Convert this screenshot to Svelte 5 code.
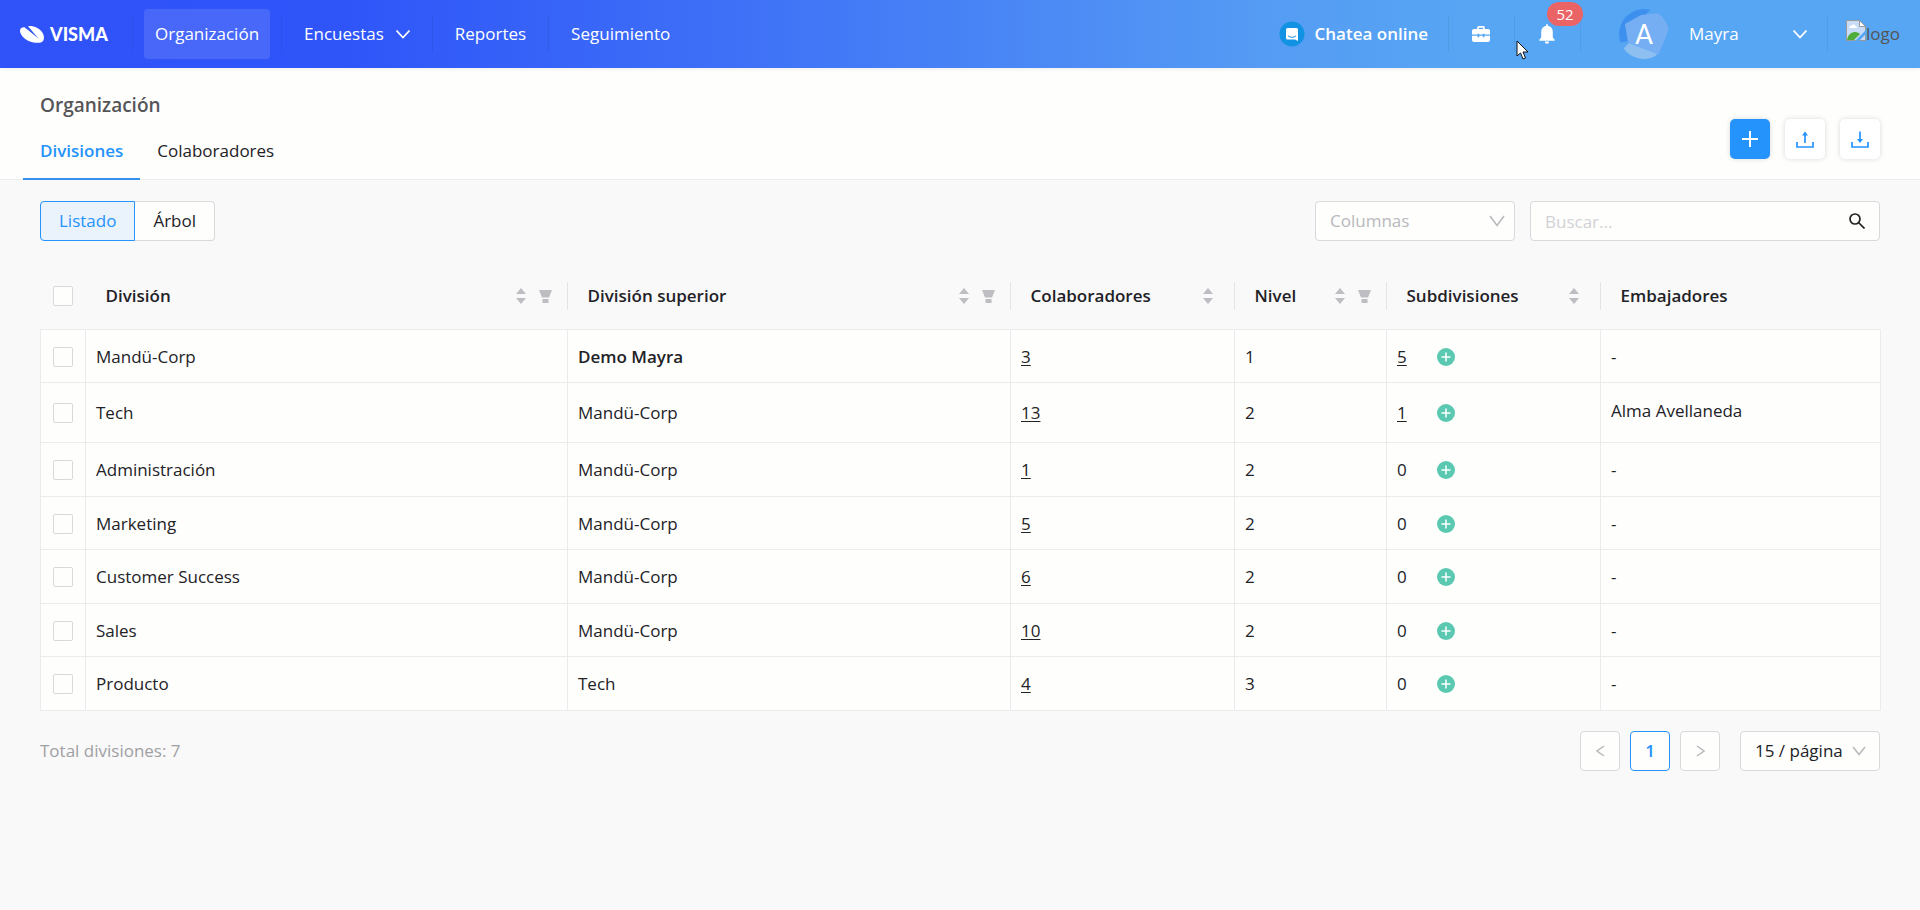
<script>
  const menu = [
    { label: 'Organización', active: true },
    { label: 'Encuestas', dropdown: true },
    { label: 'Reportes' },
    { label: 'Seguimiento' }
  ];

  const columns = [
    { label: 'División', sort: true, filter: true },
    { label: 'División superior', sort: true, filter: true },
    { label: 'Colaboradores', sort: true },
    { label: 'Nivel', sort: true, filter: true },
    { label: 'Subdivisiones', sort: true },
    { label: 'Embajadores' }
  ];

  const rows = [
    { name: 'Mandü-Corp', parent: 'Demo Mayra', root: true, people: 3, level: 1, subs: 5 },
    { name: 'Tech', parent: 'Mandü-Corp', people: 13, level: 2, subs: 1, ambassador: 'Alma Avellaneda' },
    { name: 'Administración', parent: 'Mandü-Corp', people: 1, level: 2, subs: 0 },
    { name: 'Marketing', parent: 'Mandü-Corp', people: 5, level: 2, subs: 0 },
    { name: 'Customer Success', parent: 'Mandü-Corp', people: 6, level: 2, subs: 0 },
    { name: 'Sales', parent: 'Mandü-Corp', people: 10, level: 2, subs: 0 },
    { name: 'Producto', parent: 'Tech', people: 4, level: 3, subs: 0 }
  ];

  let view = 'list';
  let search = '';
  let selected = rows.map(() => false);

  $: allSelected = selected.every(Boolean);

  function toggleAll() {
    const value = !allSelected;
    selected = rows.map(() => value);
  }
</script>

<header>
  <a href="#home" class="brand">
    <svg width="24" height="17" viewBox="0 0 24 17" fill="#fff">
      <path d="M4.500 1.200C1.500 1 0 2.600 0 5c.2 4.300 5.500 9.300 11.500 11 5 1.300 9.500 1.200 11.300-.7 1.700-2.300 1.500-5.700-.5-8.800C19.500 2.200 13.500-.5 8 .2l10.500 12.300z" />
    </svg>
    <span>VISMA</span>
  </a>

  <nav>
    {#each menu as item}
      <div class="item">
        <a href="#{item.label}" class:active={item.active}>
          {item.label}
          {#if item.dropdown}
            <svg width="14" height="9" viewBox="0 0 14 9" fill="none" stroke="#fff" stroke-width="1.6"><path d="M.5.500L7 7.500 13.500.5" /></svg>
          {/if}
        </a>
      </div>
    {/each}
  </nav>

  <a href="#chat" class="chat">
    <svg width="26" height="26" viewBox="0 0 26 26">
      <circle cx="13" cy="13" r="12.500" fill="#1292e2" />
      <path d="M8.500 7h9A1.500 1.500 0 0 1 19 8.500V20l-3-1.500H8.500A1.500 1.500 0 0 1 7 17V8.500A1.500 1.500 0 0 1 8.500 7z" fill="#fff" />
      <path d="M9 14.800c2.500 2 5.500 2 8 0" fill="none" stroke="#1292e2" />
    </svg>
    <span>Chatea online</span>
  </a>

  <button class="icon" aria-label="Proyectos">
    <svg width="18" height="16" viewBox="0 0 18 16" fill="#fff">
      <path d="M5.200 3V1.600C5.200.7 5.900 0 6.800 0h4.400c.9 0 1.600.7 1.600 1.600V3H16a2 2 0 0 1 2 2v3.500h-5.500V7.800h-1.800v.7H7.300v-.7H5.500v.7H0V5a2 2 0 0 1 2-2zm1.700 0h4.200V1.700H6.900z" />
      <path d="M0 9.700h5.500v1.600h1.800V9.700h3.400v1.600h1.800V9.700H18V14a2 2 0 0 1-2 2H2a2 2 0 0 1-2-2z" />
    </svg>
  </button>

  <button class="icon bell" aria-label="Notificaciones">
    <svg width="16" height="20" viewBox="0 0 16 20" fill="#fff">
      <path d="M7.200 1.800V.8a.8.8 0 0 1 1.600 0v1c3 .4 5 2.700 5 5.900v5.800l1.700 2c.5.600.3 1.300-.5 1.300H1c-.8 0-1-.7-.5-1.300l1.700-2V7.700c0-3.200 2-5.500 5-5.900zM5.800 17.600h4.400a2.200 2.200 0 0 1-4.400 0z" />
    </svg>
    <span class="badge">52</span>
  </button>

  <button class="user">
    <svg class="avatar" width="50" height="50" viewBox="0 0 50 50">
      <defs><clipPath id="round"><circle cx="25" cy="25" r="25" /></clipPath></defs>
      <g clip-path="url(#round)">
        <path d="M0 0h32L20 12 6 15l3 17-9 2z" fill="#3d90ee" />
        <path d="M6 15l16-9 20-2 8 14-3 10-8 18L9 33z" fill="#76aef3" />
        <path d="M10 34l28 11-6 7H12L4 40z" fill="#8dc0f1" />
      </g>
      <text x="25" y="35" text-anchor="middle">A</text>
    </svg>
    <span>Mayra</span>
    <svg width="14" height="9" viewBox="0 0 14 9" fill="none" stroke="#fff" stroke-width="1.800"><path d="M.5.500L7 7.500 13.500.5" /></svg>
  </button>

  <a href="#company" class="company">
    <svg width="20" height="21" viewBox="0 0 20 21">
      <path d="M.5.500h13l6 6v14H.5z" fill="#c9dcf7" stroke="#9a9a9a" />
      <path d="M3 8c0-2 1.500-2 2-2 1-2 4-2 4.500 0C11 6 11 8 11 8z" fill="#fff" />
      <path d="M1 20c1-6 5-8 8-8 2.500 0 4 1 5 2l-6 6z" fill="#4fae3b" />
      <path d="M20 10v4L13 21H9z" fill="#58a6f3" />
      <path d="M13.500.5v6h6z" fill="#fff" stroke="#9a9a9a" />
    </svg>
    <span>logo</span>
  </a>

  <svg class="pointer" width="13" height="20" viewBox="0 0 13 20"><path d="M1 1v15l3.500-3 2.500 6 2.500-1-2.500-6H12z" fill="#fff" stroke="#111" /></svg>
</header>

<section class="title">
  <div>
    <h1>Organización</h1>
    <div class="tabs">
      <a href="#divisiones" class="current">Divisiones</a>
      <a href="#colaboradores">Colaboradores</a>
    </div>
  </div>

  <div class="actions">
    <button class="primary" aria-label="Agregar">
      <svg width="16" height="16" viewBox="0 0 16 16" stroke="#fff" stroke-width="2"><path d="M8 0v16M0 8h16" /></svg>
    </button>
    <button aria-label="Importar">
      <svg width="18" height="17" viewBox="0 0 18 17" fill="none" stroke="#2593fc" stroke-width="1.700"><path d="M1 11v5h16v-5M9 12V3" /><path d="M9 .5l3 4H6z" fill="#2593fc" stroke="none" /></svg>
    </button>
    <button aria-label="Exportar">
      <svg width="18" height="17" viewBox="0 0 18 17" fill="none" stroke="#2593fc" stroke-width="1.700"><path d="M1 11v5h16v-5M9 .5V9" /><path d="M9 12l3-4H6z" fill="#2593fc" stroke="none" /></svg>
    </button>
  </div>
</section>

<main>
  <div class="toolbar">
    <div class="switch">
      <button class:on={view === 'list'} on:click={() => { view = 'list'; }}>Listado</button>
      <button class:on={view === 'tree'} on:click={() => { view = 'tree'; }}>Árbol</button>
    </div>

    <div class="select columns">
      <select aria-label="Columnas">
        <option>Columnas</option>
      </select>
      <svg width="16" height="12" viewBox="0 0 16 12" fill="none" stroke="#b8b8bc" stroke-width="1.500"><path d="M1 1l7 9.500L15 1" /></svg>
    </div>

    <label class="search">
      <input type="text" placeholder="Buscar..." aria-label="Buscar" bind:value={search}>
      <svg width="16" height="16" viewBox="0 0 16 16" fill="none" stroke="#222" stroke-width="1.700"><circle cx="6" cy="6" r="5" /><path d="M9.500 9.500l6 6" /></svg>
    </label>
  </div>

  <table>
    <colgroup>
      <col class="c_check">
      <col class="c_name">
      <col class="c_parent">
      <col class="c_people">
      <col class="c_level">
      <col class="c_subs">
      <col class="c_amb">
    </colgroup>
    <thead>
      <tr>
        <th class="check"><input type="checkbox" aria-label="Seleccionar todo" checked={allSelected} on:change={toggleAll}></th>
        {#each columns as col}
          <th>
            <div class="head" class:filtered={col.filter}>
              <span>{col.label}</span>
              {#if col.sort}
                <svg width="10" height="16" viewBox="0 0 10 16" fill="#bdbdc2"><path d="M5 0l5 6H0zM5 16l5-6H0z" /></svg>
              {/if}
              {#if col.filter}
                <svg width="13" height="13" viewBox="0 0 13 13" fill="#bdbdc2"><path d="M0 0h13l-3 7.500H3zM3.500 9h6v4h-6z" /></svg>
              {/if}
            </div>
          </th>
        {/each}
      </tr>
    </thead>
    <tbody>
      {#each rows as row, i}
        <tr class:tall={row.ambassador}>
          <td class="check"><input type="checkbox" aria-label={row.name} bind:checked={selected[i]}></td>
          <td>{row.name}</td>
          <td class:root={row.root}>{row.parent}</td>
          <td><a href="#colaboradores">{row.people}</a></td>
          <td>{row.level}</td>
          <td>
            <div class="subs">
              {#if row.subs}
                <a href="#subdivisiones">{row.subs}</a>
              {:else}
                <span>{row.subs}</span>
              {/if}
              <button aria-label="Agregar subdivisión">
                <svg width="18" height="18" viewBox="0 0 18 18"><circle cx="9" cy="9" r="9" fill="#5bc9b1" /><path d="M9 4.500v9M4.500 9h9" stroke="#fff" stroke-width="1.500" /></svg>
              </button>
            </div>
          </td>
          <td class="ambassador">{row.ambassador || '-'}</td>
        </tr>
      {/each}
    </tbody>
  </table>

  <footer>
    <span class="total">Total divisiones: {rows.length}</span>
    <button aria-label="Anterior" disabled>
      <svg width="9" height="12" viewBox="0 0 9 12" fill="none" stroke="#b8b8bc" stroke-width="1.500"><path d="M8 1L1 6l7 5" /></svg>
    </button>
    <button class="page">1</button>
    <button aria-label="Siguiente" disabled>
      <svg width="9" height="12" viewBox="0 0 9 12" fill="none" stroke="#b8b8bc" stroke-width="1.500"><path d="M1 1l7 5-7 5" /></svg>
    </button>
    <div class="select size">
      <select aria-label="Filas por página">
        <option>15 / página</option>
        <option>30 / página</option>
      </select>
      <svg width="14" height="10" viewBox="0 0 14 10" fill="none" stroke="#b8b8bc" stroke-width="1.500"><path d="M1 1l6 7.500L13 1" /></svg>
    </div>
  </footer>
</main>

<style>
  :global(body) {
    margin: 0;
    background-color: #f9f9fa;
    color: #222226;
    font-family: 'Segoe UI', 'Open Sans', 'Noto Sans', sans-serif;
    font-size: 17px;
    line-height: 24px;
  }

  button, input, select {
    box-sizing: border-box;
    margin: 0;
    font: inherit;
    color: inherit;
  }

  button {
    display: flex;
    align-items: center;
    justify-content: center;
    padding: 0;
    border: none;
    background: none;
    cursor: pointer;
  }

  a {
    color: inherit;
    text-decoration: none;
  }

  svg {
    display: block;
    flex: none;
  }

  header {
    position: relative;
    display: flex;
    align-items: center;
    height: 68px;
    color: #fff;
    background: linear-gradient(90deg, #2f52f9 0%, #2f55f9 18%, #3e70f7 38%, #559cf4 66%, #57a6f3 78%, #57a6f3 100%);
    box-shadow: 0 1px 4px rgba(0, 0, 0, 0.08);
  }

  .brand {
    display: flex;
    align-items: center;
    box-sizing: border-box;
    width: 133px;
    height: 36px;
    padding-left: 20px;
    gap: 6px;
    border-right: 1px solid rgba(0, 0, 0, 0.06);
  }

  .brand span {
    font-family: Lato, sans-serif;
    font-size: 18px;
    font-weight: 900;
  }

  nav {
    display: flex;
    flex: 1;
  }

  .item {
    display: flex;
    align-items: center;
    height: 36px;
    padding: 0 11px;
    border-right: 1px solid rgba(0, 0, 0, 0.06);
  }

  .item:last-child {
    border: none;
  }

  .item a {
    display: flex;
    align-items: center;
    gap: 12px;
    height: 50px;
    padding: 0 11px;
    border-radius: 4px;
  }

  .item a.active {
    background-color: rgba(255, 255, 255, 0.12);
  }

  .chat {
    display: flex;
    align-items: center;
    gap: 10px;
    height: 36px;
    padding-right: 20px;
    font-weight: 600;
    border-right: 1px solid rgba(0, 0, 0, 0.06);
  }

  .icon {
    position: relative;
    width: 66px;
    height: 36px;
    padding-right: 2px;
    border-right: 1px solid rgba(0, 0, 0, 0.06);
  }

  .badge {
    position: absolute;
    top: -14px;
    right: -3px;
    width: 36px;
    height: 24px;
    border-radius: 12px;
    background-color: #ea6466;
    font-size: 15px;
    text-align: center;
  }

  .user {
    width: 247px;
    height: 36px;
    padding: 0 20px 0 38px;
    gap: 20px;
    border-right: 1px solid rgba(0, 0, 0, 0.06);
  }

  .user span {
    flex: 1;
    text-align: left;
  }

  .avatar text {
    fill: #fff;
    font-family: Lato, sans-serif;
    font-size: 26px;
  }

  .company {
    display: flex;
    align-items: center;
    padding: 0 20px 0 18px;
    color: #555;
  }

  .company svg {
    margin-bottom: 8px;
  }

  .pointer {
    position: absolute;
    top: 40px;
    right: 391px;
  }

  .title {
    display: flex;
    justify-content: space-between;
    height: 111px;
    padding: 0 40px 0 23px;
    background-color: #fefefd;
    border-bottom: 1px solid #ececec;
  }

  h1 {
    margin: 25px 17px 16px;
    font-size: 19px;
    line-height: 24px;
    font-weight: 600;
    color: #555558;
  }

  .tabs {
    display: flex;
  }

  .tabs a {
    height: 47px;
    padding: 6px 17px 0;
    box-sizing: border-box;
  }

  .tabs a.current {
    color: #2593fc;
    font-weight: 600;
    border-bottom: 2px solid #3590ee;
  }

  .actions {
    display: flex;
    gap: 15px;
    padding-top: 51px;
  }

  .actions button {
    width: 40px;
    height: 40px;
    border-radius: 5px;
    background-color: #fff;
    box-shadow: 0 0 5px rgba(0, 0, 0, 0.15);
  }

  .actions .primary {
    background-color: #2593fc;
  }

  main {
    padding: 21px 40px;
  }

  .toolbar {
    display: flex;
    gap: 15px;
  }

  .switch {
    display: flex;
    flex: 1;
  }

  .switch button {
    height: 40px;
    padding: 0 18px;
    background-color: #fefefd;
    border: 1px solid #d9d9dc;
    border-left: none;
    border-radius: 0 4px 4px 0;
  }

  .switch button:first-child {
    border-left: 1px solid #d9d9dc;
    border-radius: 4px 0 0 4px;
  }

  .switch button.on {
    color: #2593fc;
    background-color: #eaf2fc;
    border: 1px solid #2593fc;
  }

  .select, .search {
    display: grid;
    align-items: center;
    height: 40px;
  }

  .select > *, .search > * {
    grid-area: 1 / 1;
  }

  .select select, .search input {
    width: 100%;
    height: 40px;
    padding: 0 14px;
    appearance: none;
    background-color: #fefefd;
    border: 1px solid #d9d9dc;
    border-radius: 4px;
  }

  .select svg, .search svg {
    justify-self: end;
    margin-right: 15px;
    pointer-events: none;
  }

  .select svg {
    margin-right: 10px;
  }

  .columns {
    width: 200px;
  }

  .columns select {
    color: #b8b8bc;
  }

  .search {
    width: 350px;
  }

  .search input::placeholder {
    color: #d2d2d6;
  }

  .size {
    width: 140px;
    margin-left: 10px;
  }

  .size svg {
    margin-right: 14px;
  }

  table {
    width: 100%;
    margin-top: 34px;
    table-layout: fixed;
    border-collapse: collapse;
  }

  .c_check { width: 45px; }
  .c_name { width: 482px; }
  .c_parent { width: 443px; }
  .c_people { width: 224px; }
  .c_level { width: 152px; }
  .c_subs { width: 214px; }
  .c_amb { width: 280px; }

  th {
    padding: 0 0 12px;
    height: 42px;
    font-weight: 600;
    text-align: left;
  }

  .head {
    display: flex;
    align-items: center;
    gap: 13px;
    height: 28px;
    padding: 0 21px 0 20px;
    border-right: 1px solid #e4e4e6;
  }

  .head.filtered {
    padding-right: 15px;
  }

  th:last-child .head {
    border: none;
  }

  .head span {
    flex: 1;
    white-space: nowrap;
  }

  td {
    height: 53px;
    padding: 1px 0 0 10px;
    background-color: #fefefd;
    border: 1px solid #ebebed;
    box-sizing: border-box;
  }

  tr:nth-child(odd) td {
    height: 54px;
  }

  tr:first-child td {
    height: 53px;
  }

  tr.tall td {
    height: 60px;
  }

  tr.tall .ambassador {
    padding-bottom: 5px;
  }

  td a {
    text-decoration: underline;
    text-underline-offset: 2px;
  }

  td.root {
    font-weight: 600;
  }

  .check {
    padding-left: 0;
    text-align: center;
  }

  .check input {
    display: block;
    width: 20px;
    height: 20px;
    margin: 0 auto;
    appearance: none;
    background-color: #fefefd;
    border: 1px solid #d9d9dc;
    border-radius: 2px;
  }

  .check input:checked {
    background-color: #2593fc;
  }

  .subs {
    display: flex;
    align-items: center;
    gap: 30px;
  }

  footer {
    display: flex;
    align-items: center;
    gap: 10px;
    margin-top: 20px;
  }

  .total {
    flex: 1;
    color: #a0a0a2;
  }

  footer button {
    width: 40px;
    height: 40px;
    background-color: #fefefd;
    border: 1px solid #d9d9dc;
    border-radius: 4px;
  }

  footer .page {
    color: #2593fc;
    font-weight: 600;
    border-color: #2593fc;
  }
</style>
